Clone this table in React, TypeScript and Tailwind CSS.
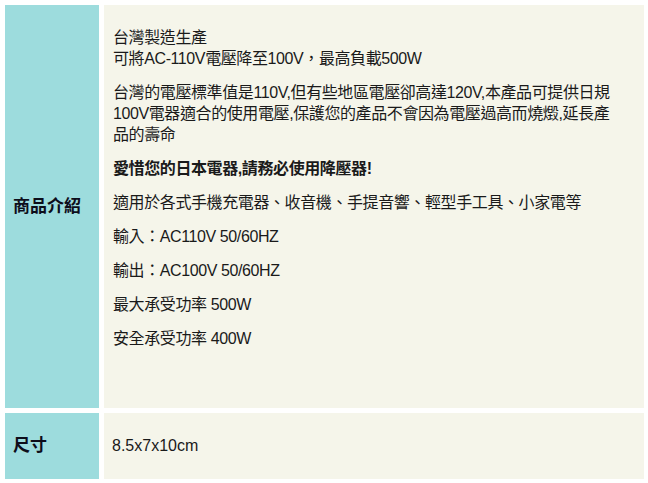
export default function App() {
  const font = { fontFamily: '"Liberation Sans", Arial, "Noto Sans CJK TC", sans-serif' };
  return (
    <div className="w-[648px] h-[483px] bg-white pt-[5px] pl-[5px] text-[#1a1a1a]" style={font}>
      <div className="grid grid-cols-[94px_540px] grid-rows-[403px_66px] gap-[5px]">
        <div className="bg-[#9ddcdd] flex items-center pl-[8px] text-[17px] font-bold text-[#0d0d1a]">
          商品介紹
        </div>
        <div className="bg-[#f5f5ea] pl-[9px] pr-[4px] pt-[22px] text-[16px] tracking-[-0.4px] leading-[21px] whitespace-nowrap">
          <p className="mb-[13px]">
            台灣製造生產
            <br />
            可將AC-110V電壓降至100V，最高負載500W
          </p>
          <p className="mb-[13px]">
            台灣的電壓標準值是110V,但有些地區電壓卻高達120V,本產品可提供日規
            <br />
            100V電器適合的使用電壓,保護您的產品不會因為電壓過高而燒燬,延長產
            <br />
            品的壽命
          </p>
          <p className="mb-[13px] font-bold">愛惜您的日本電器,請務必使用降壓器!</p>
          <p className="mb-[13px]">適用於各式手機充電器、收音機、手提音響、輕型手工具、小家電等</p>
          <p className="mb-[13px]">輸入：AC110V 50/60HZ</p>
          <p className="mb-[13px]">輸出：AC100V 50/60HZ</p>
          <p className="mb-[13px]">最大承受功率 500W</p>
          <p className="mb-[13px]">安全承受功率 400W</p>
        </div>
        <div className="bg-[#9ddcdd] flex items-center pl-[8px] text-[17px] font-bold text-[#0d0d1a]">
          尺寸
        </div>
        <div className="bg-[#f5f5ea] flex items-center pl-[8px] text-[16px]">8.5x7x10cm</div>
      </div>
    </div>
  );
}
